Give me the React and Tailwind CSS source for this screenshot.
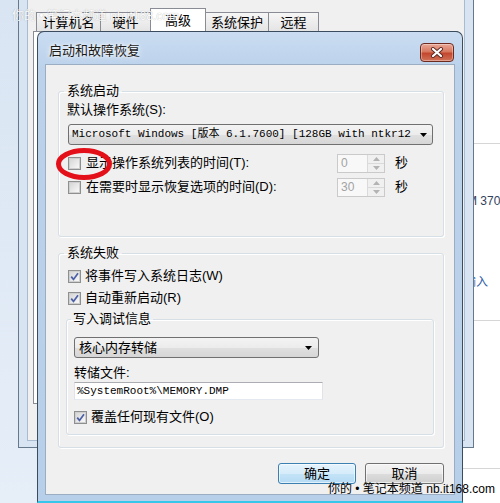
import React from 'react'

const UI = "font-['Liberation_Sans','Noto_Sans_CJK_SC',sans-serif]"
const MONO = "font-['Liberation_Mono','Noto_Sans_CJK_SC',monospace]"

function CheckBox({ checked }) {
  return (
    <span className="flex h-[13px] w-[13px] shrink-0 items-center justify-center border border-[#8e8f8f] bg-[#f4f4f4]">
      <span className="flex h-[11px] w-[11px] items-center justify-center border border-[#cfcfcf] bg-[linear-gradient(135deg,#d6d6d6,#f8f8f8)]">
        {checked && (
          <svg width="9" height="9" viewBox="0 0 9 9">
            <path d="M1.2 4.6 L3.5 7.4 L8 1.2" fill="none" stroke="#4a5fa6" strokeWidth="1.7" />
          </svg>
        )}
      </span>
    </span>
  )
}

function SpinBox({ value }) {
  return (
    <div className="flex h-[19px] w-[48px] border border-[#cacaca] bg-[#f8f8f8]">
      <span className="flex-1 pl-[3px] text-[12px] leading-[17px] text-[#a3a3a3]">{value}</span>
      <div className="flex w-[17px] flex-col border-l border-[#dadada] bg-[#f0f0f0]">
        <span className="flex flex-1 items-center justify-center border-b border-[#dadada]">
          <svg width="7" height="4" viewBox="0 0 7 4"><path d="M0 4 L3.5 0 L7 4Z" fill="#b3b3b3" /></svg>
        </span>
        <span className="flex flex-1 items-center justify-center">
          <svg width="7" height="4" viewBox="0 0 7 4"><path d="M0 0 L3.5 4 L7 0Z" fill="#b3b3b3" /></svg>
        </span>
      </div>
    </div>
  )
}

function DownArrow() {
  return (
    <svg width="7" height="4" viewBox="0 0 7 4" className="shrink-0">
      <path d="M0 0 L7 0 L3.5 4Z" fill="#000" />
    </svg>
  )
}

function CloseButton() {
  return (
    <div className="mt-[11px] flex h-[19px] w-[34px] items-center justify-center rounded-[4px] border border-[#6e2a1e] bg-[linear-gradient(#e9a897,#d7775f_45%,#c2472e_55%,#d2735a)] shadow-[inset_0_0_0_1px_rgba(255,255,255,0.35)]">
      <svg width="14" height="11" viewBox="0 0 14 11">
        <path d="M3 2 L11 9 M11 2 L3 9" stroke="#5a2a24" strokeWidth="4" strokeLinecap="round" />
        <path d="M3 2 L11 9 M11 2 L3 9" stroke="#fff" strokeWidth="2.2" strokeLinecap="round" />
      </svg>
    </div>
  )
}

export default function App() {
  return (
    <div className={`relative h-[503px] w-[500px] overflow-hidden bg-white ${UI}`}>
      {/* desktop on the left */}
      <div className="absolute left-0 top-0 h-full w-[40px] bg-[linear-gradient(#d9e5f3,#e6eef8)]" />

      {/* page behind on the right */}
      <div className="absolute left-[473px] top-[143px] h-px w-[27px] bg-[#d6d6d6]" />
      <div className="absolute left-[473px] top-[320px] h-px w-[27px] bg-[#d6d6d6]" />
      <div className="absolute left-[463px] top-[468px] h-px w-[37px] bg-[#d6d6d6]" />
      <div className="absolute left-[467px] top-[193px] whitespace-nowrap text-[12px] leading-[16px] text-[#33415c]">M 370</div>
      <div className="absolute left-[464px] top-[274px] whitespace-nowrap text-[12px] leading-[16px] text-[#2f5fa8]">输入</div>

      {/* system properties window behind */}
      <div className="absolute left-[18px] top-[-20px] flex h-[468px] w-[456px] flex-col border border-[#66788c] bg-[#d8e4f2] px-[8px] pb-[6px]">
        <div className="flex-1 border border-t-0 border-[#a9bbd0] bg-[#f0f0f0]">
          <div className="flex h-[50px] items-end pl-[8px] text-[13px] text-black">
            <div className="flex h-[19px] w-[64px] items-center justify-center border-l border-t border-[#898c95] bg-[linear-gradient(#f6f6f6,#e4e4e4)] leading-[17px]">计算机名</div>
            <div className="flex h-[19px] w-[50px] items-center justify-center border-l border-t border-[#898c95] bg-[linear-gradient(#f6f6f6,#e4e4e4)] leading-[17px]">硬件</div>
            <div className="flex h-[23px] w-[56px] items-center justify-center border-x border-t border-[#898c95] bg-white leading-[17px]">高级</div>
            <div className="flex h-[19px] w-[62px] items-center justify-center border-t border-[#898c95] bg-[linear-gradient(#f6f6f6,#e4e4e4)] leading-[17px]">系统保护</div>
            <div className="flex h-[19px] w-[51px] items-center justify-center border-x border-t border-[#898c95] bg-[linear-gradient(#f6f6f6,#e4e4e4)] leading-[17px]">远程</div>
          </div>
          <div className="ml-[5px] h-[373px] w-[425px] border border-[#898c95] bg-white" />
        </div>
      </div>

      {/* startup and recovery dialog */}
      <div className="absolute left-[37px] top-[31px] flex h-[472px] w-[426px] flex-col rounded-t-[7px] border border-b-2 border-[#3b4c5f] border-b-[#35c6ec] bg-[linear-gradient(#c9dcf1,#bcd2eb_36px,#b8cfe9)]">
        <div className="flex h-[32px] shrink-0 items-start justify-between pl-[11px] pr-[8px]">
          <span className="pt-[10px] text-[13px] leading-[17px] text-[#1b1b1b] [text-shadow:0_0_6px_#fff,0_0_3px_#fff]">启动和故障恢复</span>
          <CloseButton />
        </div>

        <div className="mx-[7px] flex h-[431px] shrink-0 flex-col border border-[#9badc3] bg-[#f0f0f0] text-[13px] text-black">
          <fieldset className="ml-[12px] mt-[17px] h-[155px] w-[386px] rounded-[3px] border border-[#d5dfe5] shadow-[inset_1px_1px_0_#fff,1px_1px_0_#fff]">
            <legend className="ml-[5px] px-[3px] leading-[18px]">系统启动</legend>
            <div className="mt-[1px] pl-[8px] leading-[18px]">默认操作系统(S):</div>
            <div className="ml-[9px] mt-[5px] flex h-[21px] w-[365px] items-center rounded-[3px] border border-[#707070] bg-[linear-gradient(#f3f3f3,#ececec_50%,#e0e0e0_50%,#d6d6d6)] pl-[3px] pr-[5px]">
              <span className={`flex-1 overflow-hidden whitespace-nowrap text-[11px] leading-[19px] ${MONO}`}>Microsoft Windows [版本 6.1.7600] [128GB with ntkr12</span>
              <DownArrow />
            </div>
            <div className="mt-[6px] flex h-[24px] items-center pl-[9px]">
              <CheckBox />
              <span className="ml-[5px] w-[251px] leading-[18px]">显示操作系统列表的时间(T):</span>
              <SpinBox value="0" />
              <span className="ml-[10px] leading-[18px]">秒</span>
            </div>
            <div className="flex h-[24px] items-center pl-[9px]">
              <CheckBox />
              <span className="ml-[5px] w-[251px] leading-[18px]">在需要时显示恢复选项的时间(D):</span>
              <SpinBox value="30" />
              <span className="ml-[10px] leading-[18px]">秒</span>
            </div>
          </fieldset>

          <fieldset className="ml-[12px] mt-[7px] h-[204px] w-[386px] rounded-[3px] border border-[#d5dfe5] shadow-[inset_1px_1px_0_#fff,1px_1px_0_#fff]">
            <legend className="ml-[5px] px-[3px] leading-[18px]">系统失败</legend>
            <div className="mt-[3px] flex h-[22px] items-center pl-[9px]">
              <CheckBox checked />
              <span className="ml-[4px] leading-[18px]">将事件写入系统日志(W)</span>
            </div>
            <div className="flex h-[22px] items-center pl-[9px]">
              <CheckBox checked />
              <span className="ml-[4px] leading-[18px]">自动重新启动(R)</span>
            </div>

            <fieldset className="ml-[7px] mt-[1px] h-[125px] w-[368px] rounded-[3px] border border-[#d5dfe5] shadow-[inset_1px_1px_0_#fff,1px_1px_0_#fff]">
              <legend className="ml-[4px] px-[2px] leading-[18px]">写入调试信息</legend>
              <div className="ml-[7px] mt-[9px] flex h-[21px] w-[245px] items-center rounded-[3px] border border-[#707070] bg-[linear-gradient(#f3f3f3,#ececec_50%,#e0e0e0_50%,#d6d6d6)] pl-[4px] pr-[6px]">
                <span className="flex-1 leading-[18px]">核心内存转储</span>
                <DownArrow />
              </div>
              <div className="mt-[6px] pl-[7px] leading-[18px]">转储文件:</div>
              <div className="ml-[7px] flex h-[18px] w-[249px] items-center border border-[#abadb3] border-x-[#e2e3ea] border-b-[#e3e9ef] bg-white pl-[2px]">
                <span className={`whitespace-nowrap text-[11px] leading-[16px] ${MONO}`}>%SystemRoot%\MEMORY.DMP</span>
              </div>
              <div className="mt-[6px] flex h-[22px] items-center pl-[7px]">
                <CheckBox checked />
                <span className="ml-[4px] leading-[18px]">覆盖任何现有文件(O)</span>
              </div>
            </fieldset>
          </fieldset>

          <div className="mt-[15px] flex justify-end gap-[9px] pr-[10px]">
            <button className="h-[21px] w-[78px] rounded-[3px] border border-[#3c7fb1] bg-[linear-gradient(#e5f3fc,#d6ecfa_50%,#c4e3f7_50%,#b5dbf4)] leading-[18px] shadow-[inset_0_0_0_1px_rgba(255,255,255,0.6)]">确定</button>
            <button className="h-[21px] w-[79px] rounded-[3px] border border-[#707070] bg-[linear-gradient(#f3f3f3,#ebebeb_50%,#dddddd_50%,#cfcfcf)] leading-[18px] shadow-[inset_0_0_0_1px_rgba(255,255,255,0.6)]">取消</button>
          </div>
        </div>
      </div>

      {/* red highlight ring */}
      <svg className="absolute left-[55px] top-[147px]" width="58" height="34" viewBox="0 0 58 34">
        <ellipse cx="29" cy="17" rx="25.5" ry="13.5" fill="none" stroke="#e3101a" strokeWidth="5" />
      </svg>

      {/* watermarks */}
      <div className="absolute left-[12px] top-[8px] whitespace-nowrap text-[12px] leading-[16px] text-white opacity-90 [text-shadow:0_0_1px_rgba(0,0,0,0.35)]">你的 • 笔记本频道 nb.it168.com</div>
      <div className="absolute left-[328px] top-[481px] whitespace-nowrap text-[12px] leading-[16px] text-black">你的 • 笔记本频道 nb.it168.com</div>
    </div>
  )
}
